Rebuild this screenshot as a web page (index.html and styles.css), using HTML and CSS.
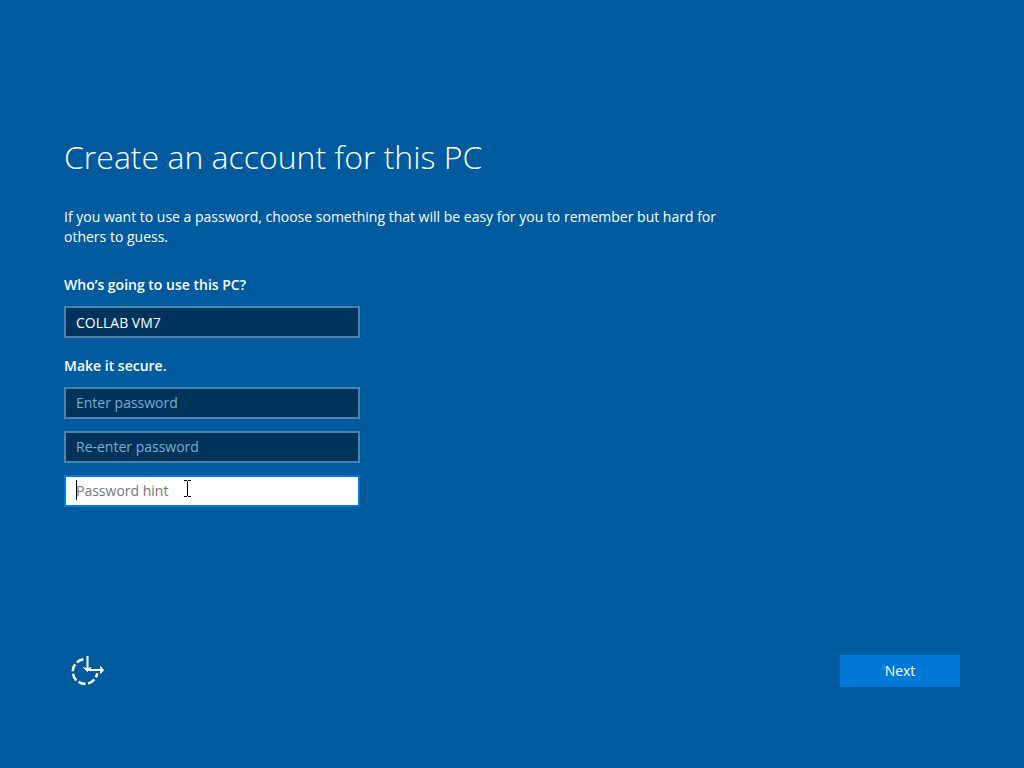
FILE: index.html
```html
<!DOCTYPE html>
<html lang="en">
<head>
  <meta charset="UTF-8" />
  <title>Create an account for this PC</title>
  <meta name="viewport" content="width=device-width, initial-scale=1.0"/>
  <link rel="stylesheet" href="styles.css">
</head>
<body>
  <form class="setup">
    <main class="content">
      <h1>Create an account for this PC</h1>
      <p class="intro">If you want to use a password, choose something that will be easy for you to remember but hard for others to guess.</p>

      <label class="group-title" for="username">Who’s going to use this PC?</label>
      <input class="field" type="text" name="username" id="username" value="COLLAB VM7">

      <label class="group-title" for="password">Make it secure.</label>
      <input class="field" type="password" name="password" id="password" placeholder="Enter password">
      <input class="field" type="password" name="confirm" id="confirm" placeholder="Re-enter password" aria-label="Re-enter password">
      <div class="hint">
        <input class="field active" type="text" name="hint" id="hint" placeholder="Password hint" aria-label="Password hint">
        <span class="caret"></span>
        <svg class="pointer" width="9" height="17" viewBox="0 0 9 17" fill="none" stroke="#000">
          <path d="M1 .5h3M5 .5h3M4.500 1v15M1 16.500h3M5 16.500h3"/>
        </svg>
      </div>
    </main>

    <footer class="actions">
      <button class="ease" type="button" aria-label="Ease of access">
        <svg width="36" height="32" viewBox="0 0 36 32" fill="none" stroke="#fff" stroke-width="2.500">
          <!-- dashed dial, open at the top right -->
          <path d="M13.500 4.300A12.300 12.300 0 1 0 27.200 18.300" stroke-dasharray="7.400 2.600"/>
          <path d="M17.500 1v13M18 15h13" stroke-width="2"/>
          <path d="M13.500 12.500L17.500 14l3.500-1.500-3.500 4zM30.500 11.500L33.500 15l-3 3.500.500-3.500z" fill="#fff" stroke-width="1"/>
        </svg>
      </button>
      <button class="next" type="submit">Next</button>
    </footer>
  </form>
</body>
</html>
```

FILE: styles.css
```css
body {
  margin: 0;
  background-color: #005a9e;
  color: #fff;
  font-family: "Segoe UI", "Open Sans", "Noto Sans", sans-serif;
  font-size: 14px;
  line-height: 20px;
}

.setup {
  box-sizing: border-box;
  min-height: 100vh;
  display: flex;
  flex-direction: column;
  justify-content: space-between;
  padding: 137px 64px 81px;
}

.content {
  display: flex;
  flex-direction: column;
  align-items: flex-start;
}

h1 {
  margin: 0 0 30px;
  font-size: 32px;
  line-height: 40px;
  font-weight: 300;
}

.intro {
  max-width: 664px;
  margin: 0 0 28px;
}

.group-title {
  font-weight: 600;
  margin-bottom: 11px;
}

.field {
  box-sizing: border-box;
  display: block;
  width: 296px;
  height: 32px;
  max-width: 100%;
  margin-bottom: 12px;
  padding: 0 10px 2px;
  border: 2px solid #4d84ae;
  border-radius: 0;
  outline: none;
  background-color: #00335c;
  color: #fff;
  font: inherit;
}

.field::placeholder {
  color: #7facd0;
  opacity: 1;
}

#username {
  margin-bottom: 18px;
  padding-bottom: 0;
}

.hint {
  position: relative;
}

.active {
  margin-bottom: 0;
  border-color: #0078d7;
  background-color: #fff;
  color: #000;
}

.active::placeholder {
  color: #767676;
}

.caret {
  position: absolute;
  left: 12px;
  top: 5px;
  width: 1px;
  height: 20px;
  background-color: #000;
}

.pointer {
  position: absolute;
  left: 119px;
  top: 5px;
}

.actions {
  display: flex;
  justify-content: space-between;
  align-items: center;
}

.ease {
  display: flex;
  height: 32px;
  padding: 0 6px;
  border: none;
  background: none;
  cursor: pointer;
}

.next {
  width: 120px;
  height: 32px;
  padding: 0;
  border: none;
  background-color: #0078d7;
  color: #fff;
  font: inherit;
  cursor: pointer;
}
```
